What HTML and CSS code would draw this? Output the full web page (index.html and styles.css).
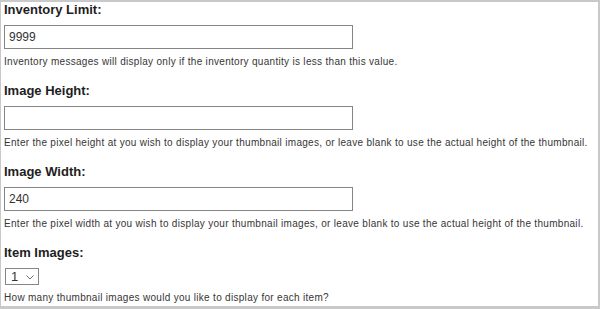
FILE: index.html
```html
<!DOCTYPE html>
<html lang="en">
<head>
<meta charset="UTF-8">
<title>Store Settings</title>
<link rel="stylesheet" href="styles.css">
</head>
<body>
<div class="panel">
    <div class="field">
        <label class="field-label" for="inventory-limit">Inventory Limit:</label>
        <input class="text-input" id="inventory-limit" type="text" value="9999">
        <p class="field-help">Inventory messages will display only if the inventory quantity is less than this value.</p>
    </div>
    <div class="field">
        <label class="field-label" for="image-height">Image Height:</label>
        <input class="text-input" id="image-height" type="text" value="">
        <p class="field-help">Enter the pixel height at you wish to display your thumbnail images, or leave blank to use the actual height of the thumbnail.</p>
    </div>
    <div class="field">
        <label class="field-label" for="image-width">Image Width:</label>
        <input class="text-input" id="image-width" type="text" value="240">
        <p class="field-help">Enter the pixel width at you wish to display your thumbnail images, or leave blank to use the actual height of the thumbnail.</p>
    </div>
    <div class="field">
        <label class="field-label" for="item-images">Item Images:</label>
        <div class="select-box">
            <select id="item-images" class="select-input">
                <option>1</option>
                <option>2</option>
                <option>3</option>
                <option>4</option>
            </select>
            <svg class="select-arrow" width="8" height="5" viewBox="0 0 8 5"><path d="M0.5 0.5 L4 4 L7.5 0.5" fill="none" stroke="#707070" stroke-width="1"/></svg>
        </div>
        <p class="field-help">How many thumbnail images would you like to display for each item?</p>
    </div>
</div>
</body>
</html>
```

FILE: styles.css
```css
body {
    margin: 0;
    padding: 0;
    font-family: "Liberation Sans", Arial, sans-serif;
    background-color: #ffffff;
}

.panel {
    box-sizing: border-box;
    width: 600px;
    height: 309px;
    border-style: solid;
    border-color: #c9c9c9;
    border-width: 2px 2px 3px 1px;
    padding: 0 3px;
    overflow: hidden;
}

.field {
    margin-bottom: 15px;
}

.field-label {
    display: block;
    font-size: 13px;
    font-weight: bold;
    line-height: 15px;
    color: #1e1e1e;
    margin-bottom: 8px;
}

.text-input {
    display: block;
    box-sizing: border-box;
    width: 349px;
    height: 24px;
    margin: 0;
    padding: 0 4px;
    border: 1px solid #858585;
    font-family: "Liberation Sans", Arial, sans-serif;
    font-size: 12px;
    color: #333333;
}

.field-help {
    margin: 7px 0 0;
    font-size: 10px;
    line-height: 12px;
    letter-spacing: 0.3px;
    color: #363636;
}

.select-box {
    position: relative;
    box-sizing: border-box;
    width: 34px;
    height: 17px;
    margin: 4px 0 0 1px;
    border: 1px solid #858585;
    background-color: #ffffff;
}

.select-input {
    appearance: none;
    -webkit-appearance: none;
    display: block;
    border: none;
    background: transparent;
    width: 100%;
    height: 100%;
    margin: 0;
    padding: 0 0 0 5px;
    font-family: "Liberation Sans", Arial, sans-serif;
    font-size: 13px;
    line-height: 15px;
    color: #333333;
    outline: none;
}

.select-arrow {
    position: absolute;
    right: 4px;
    top: 6px;
    pointer-events: none;
}
```
